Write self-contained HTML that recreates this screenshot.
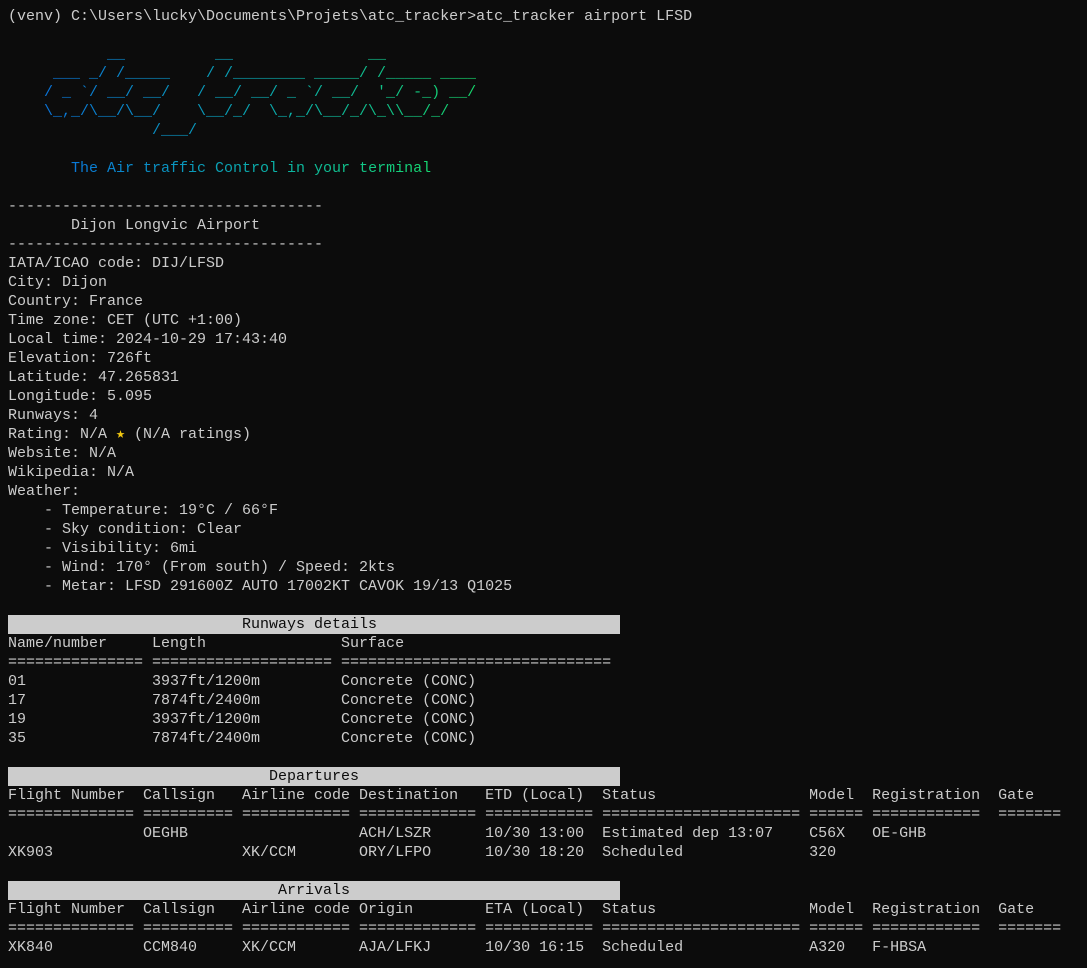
<!DOCTYPE html>
<html><head><meta charset="utf-8"><style>
html,body{margin:0;padding:0;background:#0c0c0c;width:1087px;height:968px;overflow:hidden}
pre{margin:0;padding:7px 0 0 8px;font-family:"Liberation Mono",monospace;font-size:15px;line-height:19px;color:#cccccc;white-space:pre}
.g{display:inline-block;vertical-align:top;background:linear-gradient(90deg,#0a74d8 0px,#0a74d8 40px,#0aa6b0 250px,#16d66a 470px);-webkit-background-clip:text;background-clip:text;color:transparent}
.t{display:inline-block;vertical-align:top;background:linear-gradient(90deg,#0a78d8,#0bb0a8 55%,#16d870);-webkit-background-clip:text;background-clip:text;color:transparent}
.b{display:inline-block;vertical-align:top;height:19px;background:#cccccc;color:#0c0c0c}
.s{color:#f2c811;display:inline-block;width:9px}
</style></head><body><pre>(venv) C:\Users\lucky\Documents\Projets\atc_tracker>atc_tracker airport LFSD

<span class="g">           __          __               __
     ___ _/ /_____    / /________ _____/ /_____ ____
    / _ `/ __/ __/   / __/ __/ _ `/ __/  '_/ -_) __/
    \_,_/\__/\__/    \__/_/  \_,_/\__/_/\_\\__/_/
                /___/</span>

       <span class="t">The Air traffic Control in your terminal</span>

-----------------------------------
       Dijon Longvic Airport
-----------------------------------
IATA/ICAO code: DIJ/LFSD
City: Dijon
Country: France
Time zone: CET (UTC +1:00)
Local time: 2024-10-29 17:43:40
Elevation: 726ft
Latitude: 47.265831
Longitude: 5.095
Runways: 4
Rating: N/A <span class="s">★</span> (N/A ratings)
Website: N/A
Wikipedia: N/A
Weather:
    - Temperature: 19°C / 66°F
    - Sky condition: Clear
    - Visibility: 6mi
    - Wind: 170° (From south) / Speed: 2kts
    - Metar: LFSD 291600Z AUTO 17002KT CAVOK 19/13 Q1025

<span class="b">                          Runways details                           </span>
Name/number     Length               Surface
=============== ==================== ==============================
01              3937ft/1200m         Concrete (CONC)
17              7874ft/2400m         Concrete (CONC)
19              3937ft/1200m         Concrete (CONC)
35              7874ft/2400m         Concrete (CONC)

<span class="b">                             Departures                             </span>
Flight Number  Callsign   Airline code Destination   ETD (Local)  Status                 Model  Registration  Gate
============== ========== ============ ============= ============ ====================== ====== ============  =======
               OEGHB                   ACH/LSZR      10/30 13:00  Estimated dep 13:07    C56X   OE-GHB
XK903                     XK/CCM       ORY/LFPO      10/30 18:20  Scheduled              320

<span class="b">                              Arrivals                              </span>
Flight Number  Callsign   Airline code Origin        ETA (Local)  Status                 Model  Registration  Gate
============== ========== ============ ============= ============ ====================== ====== ============  =======
XK840          CCM840     XK/CCM       AJA/LFKJ      10/30 16:15  Scheduled              A320   F-HBSA
</pre></body></html>
